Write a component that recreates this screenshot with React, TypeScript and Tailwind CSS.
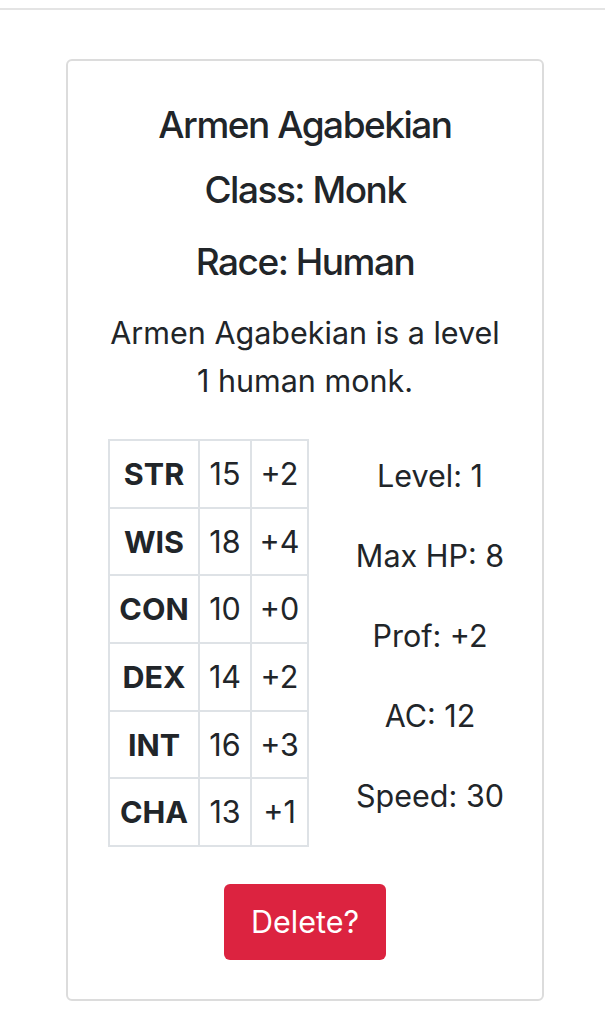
import React from "react";

const stats = [
  { name: "STR", score: 15, mod: "+2" },
  { name: "WIS", score: 18, mod: "+4" },
  { name: "CON", score: 10, mod: "+0" },
  { name: "DEX", score: 14, mod: "+2" },
  { name: "INT", score: 16, mod: "+3" },
  { name: "CHA", score: 13, mod: "+1" },
];

const extras = ["Level: 1", "Max HP: 8", "Prof: +2", "AC: 12", "Speed: 30"];

const App: React.FC = () => {
  return (
    <div className="min-h-screen bg-white text-[#212529]" style={{ fontFamily: "Inter, 'Noto Sans', sans-serif" }}>
      {/* top rule */}
      <div className="pt-2">
        <div className="h-[2px] bg-[#e4e4e4]" />
      </div>

      {/* Card */}
      <div className="mx-[66px] mt-[49px] w-[478px] h-[942px] rounded-md border-2 border-[#dcdcdc] flex flex-col items-center">
        <h3 className="mt-[42px] text-[37px] font-medium tracking-[-0.04em] leading-[44px]">Armen Agabekian</h3>
        <h3 className="mt-[21px] text-[37px] font-medium tracking-[-0.04em] leading-[44px]">Class: Monk</h3>
        <h3 className="mt-[28px] text-[37px] font-medium tracking-[-0.04em] leading-[44px]">Race: Human</h3>
        <p className="mt-[25px] w-[400px] text-center text-[30.5px] leading-[48px]">
          Armen Agabekian is a level 1 human monk.
        </p>

        {/* Stats row */}
        <div className="mt-[34px] w-full flex pl-[40px]">
          <table className="border-collapse text-[30.5px] border-2 border-[#dee2e6]">
            <tbody>
              {stats.map((s) => (
                <tr key={s.name} className="h-[67.7px]">
                  <td className="border-2 border-[#dee2e6] w-[90px] text-center font-bold">{s.name}</td>
                  <td className="border-2 border-[#dee2e6] w-[52px] text-center">{s.score}</td>
                  <td className="border-2 border-[#dee2e6] w-[57px] text-center">{s.mod}</td>
                </tr>
              ))}
            </tbody>
          </table>
          <div className="flex-1 ml-[9px] flex flex-col items-center pt-[13px] text-[30.5px] leading-[48px] gap-[32px]">
            {extras.map((e) => (
              <div key={e}>{e}</div>
            ))}
          </div>
        </div>

        <button
          type="button"
          className="mt-[37px] w-[162px] h-[76px] rounded-md bg-[#dc2340] text-white text-[30.5px]"
        >
          Delete?
        </button>
      </div>
    </div>
  );
};

export default App;
